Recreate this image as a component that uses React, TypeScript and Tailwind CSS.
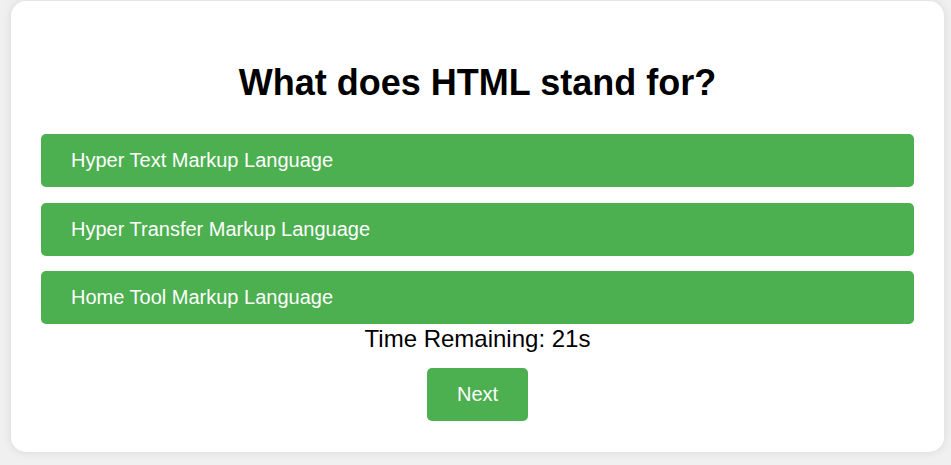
import { useEffect, useState } from "react";

const options = ["Hyper Text Markup Language", "Hyper Transfer Markup Language", "Home Tool Markup Language"];

export default function App() {
  const [seconds, setSeconds] = useState(21);

  useEffect(() => {
    // keep the timer frozen for the snapshot
    setSeconds(21);
  }, []);

  return (
    <div className="min-h-screen bg-[#f0f0f0] pt-[1px] pl-[11px] font-['Liberation_Sans',Arial,sans-serif]">
      <div className="w-[933px] rounded-[15px] bg-white px-[30px] pt-[30px] pb-[31px] shadow-[0_0_10px_rgba(0,0,0,0.1)] text-center">
        <h1 className="mt-[31px] mb-[31px] text-[36px] font-bold leading-[41px] text-black">What does HTML stand for?</h1>
        <div className="flex flex-col gap-[15.5px]">
          {options.map((o) => (
            <button
              key={o}
              className="block w-full rounded-[5px] bg-[#4caf50] px-[30px] py-[15px] text-left text-[20px] leading-[23px] text-white"
            >
              {o}
            </button>
          ))}
        </div>
        <div className="pt-[1px] text-[24px] leading-[28px] text-black">Time Remaining: {seconds}s</div>
        <button className="mt-[15px] rounded-[5px] bg-[#4caf50] px-[30px] py-[15px] text-[20px] leading-[23px] text-white">
          Next
        </button>
      </div>
    </div>
  );
}
